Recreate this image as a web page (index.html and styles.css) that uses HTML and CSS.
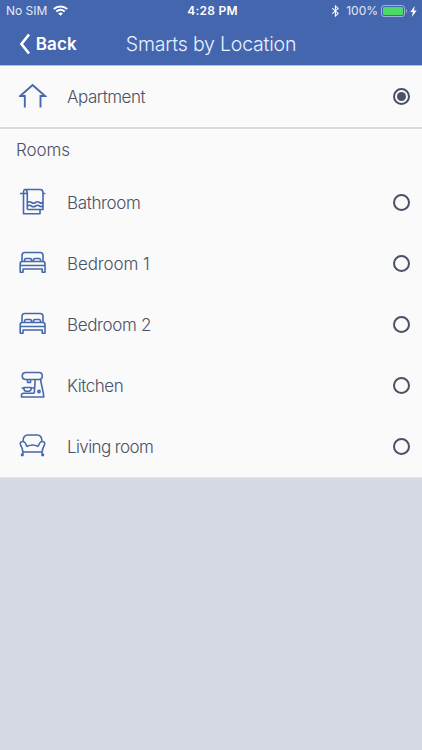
FILE: index.html
```html
<!DOCTYPE html>
<html lang="en">
<head>
<meta charset="utf-8">
<title>Smarts by Location</title>
<link rel="stylesheet" href="styles.css">
</head>
<body>
<header class="header">
  <div class="status">
    <div class="carrier"><span>No SIM</span>
      <svg width="15" height="11" viewBox="0 0 15 11" fill="none" stroke="#fff" stroke-width="2"><path d="M.8 4.1C4.6.5 10.4.5 14.2 4.1M3.3 6.6c2.5-2.2 5.9-2.2 8.4 0"/><path d="M5.1 8.4c1.5-1.1 3.3-1.1 4.8 0L7.5 10.8z" fill="#fff" stroke="none"/></svg>
    </div>
    <div class="clock">4:28 PM</div>
    <div class="power">
      <svg width="9" height="12" viewBox="0 0 9 13" fill="none" stroke="#fff" stroke-width="1.1"><path d="M1 3.5l6.4 5.7L4.4 12V1l3 2.7L1 9.4"/></svg>
      <span class="percent">100%</span>
      <svg class="battery" width="27" height="12" viewBox="0 0 27 12"><rect x=".5" y=".5" width="23" height="11" rx="2.5" fill="none" stroke="#9db1dd"/><rect x="2" y="2" width="20" height="8" rx="1" fill="#4cd964"/><path d="M25 4c1.5.5 1.5 3.500 0 4z" fill="#9db1dd"/></svg>
      <svg width="7" height="11" viewBox="0 0 7 11"><path d="M4.700 0L.3 6h2.500L1.900 11 6.700 4.600H4z" fill="#fff"/></svg>
    </div>
  </div>
  <nav class="nav">
    <div class="back"><svg width="12" height="22" viewBox="0 0 12 22" fill="none" stroke="#fff" stroke-width="2.700"><path d="M10 1.500L2.500 11l7.500 9.500"/></svg><span>Back</span></div>
    <h1 class="title">Smarts by Location</h1>
  </nav>
</header>
<main class="list">
  <div class="row home">
    <svg class="icon" viewBox="0 0 28 28"><path d="M5.800 25.500V14H1.200L13.600 3l12.400 11h-4.500v11.500"/></svg>
    <span class="label apartment">Apartment</span><i class="radio selected"></i>
  </div>
  <section class="rooms">
    <h2 class="heading">Rooms</h2>
    <div class="row">
      <svg class="icon" viewBox="0 0 28 28"><path d="M1 5.500h6.500M4.500 5.500v20.200h16.500V21.500M8.300 21.500V5c0-2-.8-3.500-2.500-3.500h15.500c2 0 2.700 1.300 2.700 3.500v16.500H8.300M5.800 1.500C4.500 1.500 4.500 3.500 4.500 5.500M24 5.500h2.300M8.500 14.500q2-1.500 4 0t4 0 4 0 3.500-.5M8.500 18q2-1.500 4 0t4 0 4 0 3.500-.5"/></svg>
      <span class="label bathroom">Bathroom</span><i class="radio"></i>
    </div>
    <div class="row">
      <svg class="icon bed" viewBox="0 0 28 28"><path d="M3 12.500V6.500c0-2 .8-3 2.800-3h15.500C23.300 3.500 24 4.500 24 6.500v6M3 12.500h21q2 0 2 2.500v8.300h-2.800V20H4v3.300H1.200V15q0-2.500 1.800-2.500zM1.200 16.500H26M4 20h19.200M5.700 12.500c-.5-2 0-3 1.500-3h3.600c1.500 0 2 1 1.700 3M14.500 12.500c-.3-2 .2-3 1.700-3h3.600c1.500 0 2 1 1.500 3"/></svg>
      <span class="label bedroom1">Bedroom 1</span><i class="radio"></i>
    </div>
    <div class="row">
      <svg class="icon bed" viewBox="0 0 28 28"><path d="M3 12.500V6.500c0-2 .8-3 2.800-3h15.500C23.300 3.500 24 4.500 24 6.500v6M3 12.500h21q2 0 2 2.500v8.300h-2.800V20H4v3.300H1.200V15q0-2.500 1.800-2.500zM1.200 16.500H26M4 20h19.200M5.700 12.500c-.5-2 0-3 1.500-3h3.600c1.500 0 2 1 1.700 3M14.500 12.500c-.3-2 .2-3 1.700-3h3.600c1.500 0 2 1 1.500 3"/></svg>
      <span class="label bedroom2">Bedroom 2</span><i class="radio"></i>
    </div>
    <div class="row">
      <svg class="icon" viewBox="0 0 28 28"><path d="M6.800 1.500h13q3.500 0 3.500 3.500t-3.500 3.500h-13Q3.300 8.500 3.300 5t3.500-3.500zM8.500 8.500V11.500h3V8.500M4.800 16.500h7.500q0 3.700-2.700 3.700H7.300q-2.500 0-2.500-3.700zM4.800 17.500Q3 17.500 3 16.500M12.300 17H15.800M16.200 8.500L15.300 22.200M21.500 8.500l2.800 13.700M4.500 22.200H15.300M24.300 22.200l.5 3.800h-22.300v-1.800q0-2 2-2"/><circle cx="20" cy="20.500" r="1.100"/></svg>
      <span class="label kitchen">Kitchen</span><i class="radio"></i>
    </div>
    <div class="row">
      <svg class="icon" viewBox="0 0 28 28"><path d="M4 9.500C4 5.500 5.500 3 9 3h9c3.500 0 5 2.500 5 6.500M7.800 14.500C7 11.500 5.500 9.500 3.500 9.500S.7 11.300 1.700 13.300s2.100 3.500 2.100 6.700h19.400c0-3.200 1.100-4.700 2.100-6.700s.2-3.800-1.800-3.800-3.500 2-4.300 5M7.800 14.500q5.700-3 11.400 0M4.300 20L3.300 22.500M22.700 20L23.700 22.500"/><circle cx="3.300" cy="22.800" r=".8"/><circle cx="23.700" cy="22.800" r=".8"/></svg>
      <span class="label living">Living room</span><i class="radio"></i>
    </div>
  </section>
</main>
</body>
</html>
```

FILE: styles.css
```css
* { box-sizing: border-box; }
body { margin: 0; min-height: 750px; background: #d6dae2; color: #4a5066; font-family: Inter, "Liberation Sans", sans-serif; font-weight: 300; }
svg { display: block; flex: none; }
.header { height: 66px; background: #4466ae; border-bottom: 1px solid #b4bfdb; color: #fff; }
.status { display: grid; grid-template-columns: 1fr auto 1fr; align-items: center; height: 22px; padding: 0 5px 0 6px; font-size: 12px; font-weight: 400; line-height: 22px; }
.carrier, .power { display: flex; align-items: center; }
.carrier { gap: 6px; letter-spacing: 0; }
.carrier svg { margin-top: -2px; }
.carrier, .percent { color: #e3e9f6; }
.clock { padding-left: 2px; font-weight: 600; letter-spacing: .25px; }
.power { justify-content: flex-end; }
.percent { margin: 0 3px 0 6px; }
.battery { margin-right: 2px; }
.nav { display: grid; grid-template-columns: 105px auto 105px; height: 44px; align-items: center; justify-content: center; }
.back { display: flex; align-items: center; gap: 5px; margin-left: -2px; font-size: 17px; font-weight: 600; letter-spacing: .1px; }
.title { margin: 0; color: #eaf0ff; font-size: 19.500px; font-weight: 300; letter-spacing: -.2px; line-height: 24px; white-space: nowrap; }
.list { background: #fafafa; border-bottom: 1px solid #e3e5ea; }
.row { display: flex; align-items: center; height: 61.1px; padding: 0 12px 0 19px; }
.home { height: 60.500px; }
.rooms { border-top: 2px solid #d9dae2; }
.heading { margin: 0; height: 43px; padding: 9px 16px 0; font-size: 17px; font-weight: 300; line-height: 24px; letter-spacing: -.1px; }
.icon { width: 28px; height: 28px; fill: none; stroke: #4568ad; stroke-width: 1.600; stroke-linejoin: round; }
.home .icon { stroke-width: 1.900; stroke-linejoin: miter; }
.label { margin-left: 20px; padding-top: 1px; flex: 1; font-size: 17px; line-height: 24px; letter-spacing: -.35px; white-space: nowrap; }
.apartment { letter-spacing: -.48px; }
.bedroom1 { letter-spacing: -.1px; }
.kitchen { letter-spacing: -.48px; }
.living { letter-spacing: -.6px; }
.radio { width: 17px; height: 17px; border: 2px solid #4a5066; border-radius: 50%; display: grid; place-items: center; }
.selected::after { content: ""; width: 9px; height: 9px; border-radius: 50%; background: #4a5066; }
```
